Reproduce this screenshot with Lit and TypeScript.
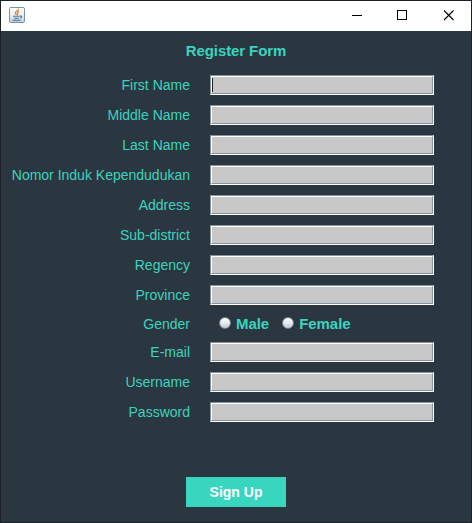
import { LitElement, html, css } from "lit";
import { customElement, property } from "lit/decorators.js";

@customElement("title-bar")
class TitleBar extends LitElement {
  static styles = css`
    :host { display: flex; height: 30px; background: #fff; align-items: center; flex: none; }
    .logo { width: 16px; height: 16px; margin: -2px 0 0 8px; }
    .spacer { flex: 1; }
    .controls { display: flex; }
    .control { width: 46px; height: 30px; display: block; }
    .controls .control:last-child { margin-right: -1px; }
    svg { display: block; }
  `;
  render() {
    return html`
      <svg class="logo" viewBox="0 0 16 16">
        <defs>
          <linearGradient id="g" x1="0" y1="0" x2="0" y2="1">
            <stop offset="0" stop-color="#fbfcfd" /><stop offset=".55" stop-color="#e9eef2" /><stop offset="1" stop-color="#b9ccd9" />
          </linearGradient>
        </defs>
        <rect x=".5" y=".5" width="15" height="15" rx="1.2" fill="url(#g)" stroke="#7893a6" />
        <path d="M9.6 1.8C9.8 3.6 5.9 4.4 6.2 6.1c.1.9 1 1.3 1.4 2M10.2 4.4C8.6 5 7.8 6 8.6 7c.4.5.2.9-.2 1.3" fill="none" stroke="#df8733" stroke-width="1.3" />
        <path d="M4 9.3h6.8M5 11.3h5M3.4 13.3h8.2M11 9.2c2.3-.8 2.5 1.4.1 1.9" fill="none" stroke="#4e7892" stroke-width="1.1" />
      </svg>
      <div class="spacer"></div>
      <div class="controls">
        <svg class="control" viewBox="0 0 46 30"><path d="M18 14.5h10" stroke="#000" fill="none" /></svg>
        <svg class="control" viewBox="0 0 46 30"><rect x="17.5" y="9.5" width="9" height="9" stroke="#000" fill="none" /></svg>
        <svg class="control" viewBox="0 0 46 30"><path d="M18 9.5l9.5 9.5M27.5 9.5L18 19" stroke="#000" stroke-width="1.1" fill="none" /></svg>
      </div>
    `;
  }
}

@customElement("form-row")
class FormRow extends LitElement {
  @property() label = "";
  @property({ type: Boolean }) active = false;
  @property({ type: Array }) options: string[] = [];
  static styles = css`
    :host { display: flex; align-items: center; height: 20px; }
    .label { width: 189px; text-align: right; font-size: 14px; line-height: 20px; white-space: nowrap; }
    .field { box-sizing: border-box; width: 224px; height: 20px; margin-left: 20px;
      border: 1px solid; border-color: #8694a1 #fff #fff #8694a1; background: #c8c8c8; }
    .inner { box-sizing: border-box; height: 18px; border: 1px solid; border-color: #fff #8694a1 #8694a1 #fff; padding-top: 1px; }
    .caret { width: 1px; height: 14px; background: #222; }
    .options { display: flex; margin-left: 29px; gap: 13px; }
    .option { display: flex; align-items: center; font-size: 15px; font-weight: bold; line-height: 20px; letter-spacing: -0.05px; }
    .radio { box-sizing: border-box; width: 12px; height: 12px; margin: -2px 5px 0 0; border-radius: 50%;
      border: 1px solid #71808d; background: linear-gradient(#fff, #e4eaf0 50%, #bccbd8); }
  `;
  render() {
    return html`
      <div class="label">${this.label}</div>
      ${this.options.length
        ? html`<div class="options">${this.options.map((o) => html`<div class="option"><span class="radio"></span>${o}</div>`)}</div>`
        : html`<div class="field"><div class="inner">${this.active ? html`<div class="caret"></div>` : ""}</div></div>`}
    `;
  }
}

@customElement("app-root")
class AppRoot extends LitElement {
  static styles = css`
    :host { display: block; box-sizing: border-box; width: 472px; height: 523px; padding: 1px; background: #1d2026;
      font-family: "Liberation Sans", Arial, sans-serif; color: #3bd3bd; }
    .window { display: flex; flex-direction: column; height: 521px; background: #2b3740; }
    .title { margin: 10px 0 0; font-size: 15px; line-height: 20px; font-weight: bold; text-align: center; letter-spacing: -0.1px; }
    .group { display: flex; flex-direction: column; gap: 10px; }
    .people { margin-top: 14px; }
    .gender { margin-top: 9px; }
    .account { margin-top: 8px; }
    .submit { display: block; width: 100px; height: 30px; margin: 55px auto 0 185px; padding: 0; border: 0;
      background: #38d6bf; color: #fff; font: bold 14px "Liberation Sans", Arial, sans-serif; }
  `;
  render() {
    const people = ["First Name", "Middle Name", "Last Name", "Nomor Induk Kependudukan", "Address", "Sub-district", "Regency", "Province"];
    const account = ["E-mail", "Username", "Password"];
    return html`
      <div class="window">
        <title-bar></title-bar>
        <div class="title">Register Form</div>
        <div class="group people">${people.map((l, i) => html`<form-row .label=${l} .active=${i === 0}></form-row>`)}</div>
        <form-row class="gender" .label=${"Gender"} .options=${["Male", "Female"]}></form-row>
        <div class="group account">${account.map((l) => html`<form-row .label=${l}></form-row>`)}</div>
        <button class="submit">Sign Up</button>
      </div>
    `;
  }
}
